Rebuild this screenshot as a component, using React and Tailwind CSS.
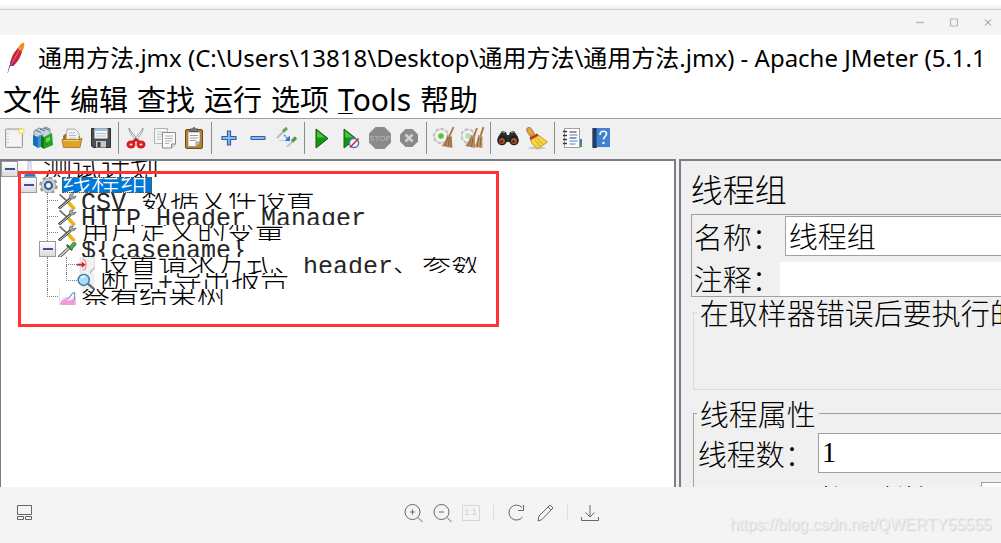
import React from "react";

const UI = "font-['Noto_Sans','Noto_Sans_CJK_SC',sans-serif]";
const TREE_FONT = "font-['Liberation_Mono','Noto_Sans_CJK_SC',monospace] font-light";
const FORM_FONT = "font-['Noto_Sans_CJK_SC',sans-serif] font-light";
const MONO = "font-['Liberation_Mono',monospace] text-[25px] font-normal text-neutral-800";
const DIGITS = "font-['Liberation_Serif',serif] text-[29px] font-normal";

function Svg({ children, className = "size-6", box = "0 0 24 24" }) {
  return (
    <svg viewBox={box} className={className} fill="none" aria-hidden="true">
      {children}
    </svg>
  );
}

const NewFile = () => (
  <Svg>
    <rect x="3.500" y="3" width="17" height="18.500" rx="1" fill="#e4e4e4" stroke="#9b9b9b" />
    <rect x="5" y="4.500" width="14" height="15.500" fill="#f4f4f4" />
    <path d="M6 7v11" stroke="#aaa" strokeDasharray="1 2" />
    <circle cx="19.500" cy="5" r="3.600" fill="#f4e04d" opacity=".65" />
    <circle cx="19.500" cy="5" r="1.800" fill="#fffbd0" />
  </Svg>
);
const Templates = () => (
  <Svg>
    <path d="M3 5l5-3 3 1 4-2 4 2v7L8 14 3 12z" fill="#c9d3d8" stroke="#6b8190" strokeWidth=".8" />
    <path d="M5 4.500l5 2M9 3l5 2M13 2l5 2" stroke="#4c6c80" />
    <path d="M2 9l5 2v11l-5-3z" fill="#1b6fb4" />
    <path d="M7 10l5-2 1 12-6 2z" fill="#3795d8" />
    <path d="M10 10l3 1v12l-3-2z" fill="#107a10" />
    <path d="M13 11l8-4 1 12-9 4z" fill="#27a51d" />
    <path d="M15 12.500l4-2v4l-4 2z" fill="#72d35f" />
    <path d="M15 18.500l1.500-.7" stroke="#083" strokeWidth="2" />
  </Svg>
);
const Open = () => (
  <Svg>
    <path d="M3 20V10l2-2h5l1 2h9v10z" fill="#a87412" />
    <path d="M6 15l1-12h8l4 4v9z" fill="#f4f4f4" stroke="#999" strokeWidth=".8" />
    <path d="M9 7h6M9 9.500h7M9 12h7" stroke="#b9b9b9" />
    <path d="M2 13.500h17l3-1.500-2 9.500H3.500z" fill="#dfa32b" stroke="#a16d10" strokeWidth=".8" />
    <path d="M3 14.500h16" stroke="#f6cf70" />
  </Svg>
);
const Save = () => (
  <Svg>
    <path d="M2.500 2.500h19v19H4l-1.500-1.500z" fill="#4c4f52" stroke="#2d2f31" />
    <rect x="5.500" y="2.500" width="13" height="10" fill="#f3f6f8" />
    <rect x="5.500" y="2.500" width="13" height="2.500" fill="#9cc3e4" />
    <path d="M7 7.500h10M7 10h10" stroke="#b9c0c5" />
    <rect x="7" y="15" width="10" height="6.500" fill="#c6c9cc" />
    <rect x="8.500" y="16" width="3" height="5" fill="#383a3c" />
  </Svg>
);
const Cut = () => (
  <Svg>
    <path d="M5 2c0 4 3 8 8 13l1.500-1.500C10 9 7 6 5 2z" fill="#e8e8e8" stroke="#8a8a8a" strokeWidth=".8" />
    <path d="M19 2c0 4-3 8-8 13l-1.500-1.500C14 9 17 6 19 2z" fill="#f4f4f4" stroke="#8a8a8a" strokeWidth=".8" />
    <ellipse cx="7" cy="18.500" rx="3" ry="2.600" stroke="#d81e1e" strokeWidth="3" />
    <ellipse cx="17" cy="18.500" rx="3" ry="2.600" stroke="#d81e1e" strokeWidth="3" />
    <path d="M9 16l3-2.500 3 2.500" stroke="#d81e1e" strokeWidth="2.600" />
  </Svg>
);
const Copy = () => (
  <Svg>
    <path d="M1.500 2.500h13v15h-13z" fill="#f5f5f5" stroke="#b3b3b3" />
    <path d="M4 6h8M4 8.500h5M4 11h4M4 13.500h4" stroke="#c5c5c5" />
    <path d="M9.500 6.500h13V18l-4 4h-9z" fill="#fafafa" stroke="#8c8c8c" />
    <path d="M12 10h8M12 12.500h8M12 15h7M12 17.500h4" stroke="#b0b0b0" />
    <path d="M18.500 22v-4h4" fill="#ddd" stroke="#8c8c8c" />
  </Svg>
);
const Paste = () => (
  <Svg>
    <rect x="3.500" y="3.500" width="17" height="19" rx="1.500" fill="#b7812e" stroke="#6f4a10" />
    <path d="M6 6h12v10l-4 4.500H6z" fill="#fafafa" stroke="#888" strokeWidth=".7" />
    <path d="M8 9.500h8M8 12h8M8 14.500h6" stroke="#9a9a9a" />
    <path d="M14 20.500V16h4" fill="#ccc" stroke="#777" strokeWidth=".7" />
    <path d="M8 5.500V3h2.500l1-1.500h1l1 1.500H16v2.500z" fill="#777b7d" stroke="#454545" strokeWidth=".8" />
  </Svg>
);
const Plus = () => (
  <Svg>
    <path d="M10.500 5h3v5.500H19v3h-5.500V19h-3v-5.500H5v-3h5.500z" fill="#8cb8e8" stroke="#2c62a8" strokeWidth="1.200" />
  </Svg>
);
const Minus = () => (
  <Svg>
    <rect x="5" y="10.500" width="14" height="3" rx=".5" fill="#8cb8e8" stroke="#2c62a8" strokeWidth="1.200" />
  </Svg>
);
const Toggle = () => (
  <Svg>
    <path d="M2 12l7-7" stroke="#b9b9b9" strokeWidth="2" />
    <path d="M8 5.500L12 2" stroke="#6ba367" strokeWidth="3.200" />
    <path d="M12 21l6-6" stroke="#c5c5c5" strokeWidth="2" />
    <path d="M17 15.500l4-4" stroke="#57964f" strokeWidth="3.200" />
    <path d="M9 9l4 4" stroke="#3b7de0" strokeWidth="1.500" strokeDasharray="2 1" />
    <path d="M15 9.500V15H9.500z" fill="#2f76df" />
    <path d="M4 14.500h5" stroke="#ccc" />
  </Svg>
);
const Run = () => (
  <Svg>
    <path d="M6 3l12 9.500L6 22z" fill="#149414" stroke="#0a5c0a" />
    <path d="M7 5l8 6.500H7z" fill="#54bd42" />
  </Svg>
);
const RunNoPause = () => (
  <Svg>
    <path d="M5 3l12 9.500L5 22z" fill="#149414" stroke="#0a6c0a" />
    <path d="M6 5l8 6.500H6z" fill="#54bd42" />
    <circle cx="15" cy="17" r="4.600" fill="#f3f6fc" stroke="#4e7bc4" strokeWidth="1.500" />
    <path d="M11 21.500l8.500-9" stroke="#d22" strokeWidth="1.400" />
  </Svg>
);
const Stop = () => (
  <Svg>
    <path d="M7.500 1h9L23 7.500v9L16.500 23h-9L1 16.500v-9z" fill="#8a8a8a" />
    <text x="12" y="15" textAnchor="middle" fontSize="8" fill="#b8b8b8" fontFamily="Liberation Sans, sans-serif">
      STOP
    </text>
  </Svg>
);
const Shutdown = () => (
  <Svg>
    <path d="M8.500 3h7L21 8.500v7L15.500 21h-7L3 15.500v-7z" fill="#8a8a8a" />
    <path d="M8.500 8.500l7 7M15.500 8.500l-7 7" stroke="#d0d0d0" strokeWidth="2.600" />
  </Svg>
);
function Gear({ cx, cy, r, dot }) {
  return (
    <g>
      <circle cx={cx} cy={cy} r={r} stroke="#bcc0bc" strokeWidth="3.400" strokeDasharray="3.200 1.700" />
      <circle cx={cx} cy={cy} r={r} fill="#f0f2f0" stroke="#c2c6c2" strokeWidth=".8" />
      <circle cx={cx} cy={cy} r="2.800" fill={dot} />
    </g>
  );
}
const Clear = () => (
  <Svg>
    <Gear cx={9} cy={10} r={6.5} dot="#5fbf3c" />
    <path d="M21.500 1l-4 9" stroke="#a8703a" strokeWidth="1.800" />
    <path d="M15 9l4.500 1 1 12-11-2c3-3 5-7 5.500-11z" fill="#b98e5e" />
    <path d="M16 11l-3 9M17.500 11l-1.500 10M19 11v10" stroke="#7c5630" strokeWidth=".8" />
  </Svg>
);
const ClearAll = () => (
  <Svg>
    <Gear cx={7} cy={10} r={6} dot="#b9dcae" />
    <path d="M16 2l-3 8M22.500 1l-3 9" stroke="#a8703a" strokeWidth="1.800" />
    <path d="M10 9l4 1v12l-10-2c3-3 5-7 6-11z" fill="#b98e5e" />
    <path d="M17 9l4.500 1v12l-9-1c3-3 4-8 4.500-12z" fill="#c09a6e" />
    <path d="M10 12l-3 8M12 12l-1.500 9M18 11l-2 10M20 11l-1 10" stroke="#7c5630" strokeWidth=".8" />
  </Svg>
);
const Search = () => (
  <Svg>
    <path d="M2 11l4-6 4 1 1 3h2l1-3 4-1 4 6v5H2z" fill="#2e2e2e" />
    <path d="M6 6l3 .5M15 6.500l3-.5" stroke="#999" strokeWidth="1.200" />
    <circle cx="6" cy="14.500" r="4.800" fill="#202020" />
    <circle cx="18" cy="14.500" r="4.800" fill="#202020" />
    <circle cx="6" cy="15" r="3" fill="#a4542f" />
    <circle cx="18" cy="15" r="3" fill="#a4542f" />
    <circle cx="5.500" cy="15.500" r="1.300" fill="#4a2415" />
    <circle cx="17.500" cy="15.500" r="1.300" fill="#4a2415" />
  </Svg>
);
const Broom = () => (
  <Svg>
    <ellipse cx="12" cy="22" rx="9" ry="1.500" fill="#ccc" />
    <path d="M1.500 3c1-2 4-2 5 0l3 5-4 2.500-3-4z" fill="#dfa544" stroke="#9a6213" strokeWidth=".8" />
    <path d="M4.500 11.500L12 7.500l2 2-8.500 5z" fill="#d2232a" />
    <path d="M5.500 14L14 9.500c3 3 6 4 8.500 6.500L13 22.500c-3-1-6-4-7.500-8.500z" fill="#f5d640" stroke="#b28a12" strokeWidth=".8" />
    <path d="M10 14l5 6M12.500 12.500l5.500 6" stroke="#c59b1b" strokeWidth=".8" />
  </Svg>
);
const FunctionHelper = () => (
  <Svg>
    <rect x="4.500" y="2.500" width="15" height="19" fill="#fff" stroke="#a0a0a0" />
    <path d="M3 5.500h4M3 9.500h4M3 13.500h4M3 17.500h4" stroke="#333" strokeWidth="1.500" />
    <path d="M9.500 6h7M9.500 12h7" stroke="#333" strokeWidth="1.200" />
    <path d="M9.500 9h8M9.500 15h8M9.500 18h6" stroke="#4285d6" strokeWidth="1.200" />
    <path d="M20 13h2v4h-2z" fill="#3a76cc" />
    <path d="M20 17h2v4h-2z" fill="#36a336" />
  </Svg>
);
const Help = () => (
  <Svg>
    <rect x="3.500" y="2" width="17.500" height="20" rx="1" fill="#3f82cf" />
    <rect x="3.500" y="2" width="4" height="20" fill="#253d5c" />
    <path d="M8 21.500h13" stroke="#dfe8f2" />
    <path d="M11 9c0-5 7-4.500 6.500-1 0 2.500-3 2.500-3 5.500" stroke="#fff" strokeWidth="1.600" />
    <circle cx="14.500" cy="17" r="1.200" fill="#fff" />
  </Svg>
);

const TOOL_GROUPS = [
  [["New", NewFile], ["Templates", Templates], ["Open", Open], ["Save", Save]],
  [["Cut", Cut], ["Copy", Copy], ["Paste", Paste]],
  [["Expand all", Plus], ["Collapse all", Minus], ["Toggle", Toggle]],
  [["Start", Run], ["Start no pauses", RunNoPause], ["Stop", Stop], ["Shutdown", Shutdown]],
  [["Clear", Clear], ["Clear all", ClearAll]],
  [["Search", Search], ["Reset search", Broom]],
  [["Function helper", FunctionHelper], ["Help", Help]],
];

const Flask = () => (
  <Svg className="size-[19px]">
    <path d="M10 2v9l-5 9h15l-6-9V2z" fill="#e3ebf3" stroke="#b3bcc6" />
    <path d="M8 15l-3 6h15l-3-6z" fill="#2f7ccc" />
  </Svg>
);
const Cog = () => (
  <Svg className="size-[19px]">
    <circle cx="12" cy="12" r="10" stroke="#9a9a9a" strokeWidth="3.500" strokeDasharray="4.400 3.450" />
    <circle cx="12" cy="12" r="9" fill="#d4d4d4" stroke="#a0a0a0" />
    <circle cx="12" cy="12" r="4.500" fill="#f4f8fc" stroke="#38629c" strokeWidth="2.800" />
  </Svg>
);
const Tools = () => (
  <Svg className="size-[19px]">
    <path d="M2 3l11 10" stroke="#6a6a6a" strokeWidth="2" />
    <path d="M13 13l8 9" stroke="#e9b414" strokeWidth="4.500" />
    <path d="M1 21L16 8" stroke="#4e5050" strokeWidth="3.600" />
    <path d="M2 20.500L16 8.500" stroke="#d5d7d7" strokeWidth="1.200" />
    <path d="M15 3c-2 4 1 7 6 5l2-3-4 1-1-2 2-2z" fill="#a5a8a8" stroke="#555" strokeWidth=".8" />
  </Svg>
);
const Dropper = () => (
  <Svg className="size-[19px]">
    <path d="M1 22L15 9" stroke="#555" strokeWidth="4" />
    <path d="M2 21L15 9" stroke="#d9d9d9" strokeWidth="1.800" />
    <path d="M11 6l7 7" stroke="#306b2e" strokeWidth="2.500" />
    <path d="M14 9l5-6c3-1 5 2 3 4l-5 5z" fill="#53a64b" stroke="#2e7730" />
  </Svg>
);
const Page = () => (
  <Svg className="size-[19px]">
    <path d="M4 1h18v15l-5 7H4z" fill="#f1f1f1" stroke="#d3d3d3" />
    <path d="M17 23c0-4 1-6 5-7" stroke="#888" />
    <path d="M0 11h7" stroke="#d22531" strokeWidth="2.500" />
    <path d="M6 7l5 4-5 4" fill="#d22531" />
    <path d="M7 4c6 1 6 13 0 14" stroke="#e58a92" strokeWidth="1.500" />
  </Svg>
);
const Lens = () => (
  <Svg className="size-[19px]">
    <path d="M4 1h18v21H4z" fill="#eeeeee" />
    <path d="M14 15l8 7" stroke="#6a6a6a" strokeWidth="3" />
    <circle cx="8.500" cy="10" r="7" fill="#a9dcf7" stroke="#3d78a3" strokeWidth="1.800" />
    <path d="M5 8c1-2 3-2.500 5-2" stroke="#fff" strokeWidth="1.500" />
  </Svg>
);
const Chart = () => (
  <Svg className="size-[19px]">
    <path d="M2 1v22" stroke="#aaa" strokeDasharray="1 1.500" />
    <path d="M3 15l6-5 5 6 8-9v15H3z" fill="#fbe3f5" />
    <path d="M3 18l6-5 5 3 8-3v9H3z" fill="#f29bd6" />
    <path d="M11 12c3 6 5-7 10-6v9" stroke="#7b96dd" strokeWidth="1.500" />
  </Svg>
);

const TREE = [
  { cells: ["box"], Icon: Flask, text: "测试计划" },
  { cells: ["blank", "box"], Icon: Cog, text: "线程组", selected: true },
  { cells: ["blank", "blank", "tee"], Icon: Tools, text: "CSV 数据文件设置" },
  { cells: ["blank", "blank", "tee"], Icon: Tools, text: "HTTP Header Manager" },
  { cells: ["blank", "blank", "tee"], Icon: Tools, text: "用户定义的变量" },
  { cells: ["blank", "blank", "box"], Icon: Dropper, text: "${casename}" },
  { cells: ["blank", "blank", "line", "tee"], Icon: Page, text: "设置请求方式、header、参数" },
  { cells: ["blank", "blank", "line", "end"], Icon: Lens, text: "断言+导出报告" },
  { cells: ["blank", "blank", "end"], Icon: Chart, text: "察看结果树" },
];

function Cell({ kind }) {
  if (kind === "box") {
    return (
      <span className="flex h-4 w-[19px] shrink-0">
        <button
          aria-label="Collapse"
          className="flex h-4 w-[17px] items-center justify-center border border-[#9a9a9a] bg-linear-to-b from-white to-[#dcdcdc]"
        >
          <span className="h-0.5 w-2.5 bg-[#3c4f9c]" />
        </button>
      </span>
    );
  }
  if (kind === "blank") return <span className="h-4 w-[19px] shrink-0" />;
  return (
    <span className="flex h-4 w-[19px] shrink-0 flex-col pl-2">
      <span
        className={
          kind === "line"
            ? "h-2 border-l border-dotted border-[#808080]"
            : "h-2 border-b border-l border-dotted border-[#808080]"
        }
      />
      <span className={kind === "end" ? "h-2" : "h-2 border-l border-dotted border-[#808080]"} />
    </span>
  );
}

/* Sets runs of ASCII in the monospaced face, half the width of a full-width character. */
function Mixed({ text }) {
  return text.split(/([\x20-\x7e]+)/).map((part, i) =>
    i % 2 ? (
      <span key={i} className={MONO}>
        {part}
      </span>
    ) : (
      part
    )
  );
}

function TreeRow({ cells, Icon, text, selected }) {
  return (
    <li className="flex h-4 overflow-hidden">
      {cells.map((kind, i) => (
        <Cell key={i} kind={kind} />
      ))}
      <span className="flex w-[19px] shrink-0 items-center justify-center">
        <Icon />
      </span>
      <span
        className={
          selected
            ? "ml-1 h-4 overflow-hidden bg-[#0078d7] pr-[3px] leading-5 whitespace-pre text-white outline-1 -outline-offset-1 outline-dotted outline-[#7a4a10]"
            : "ml-1 h-4 overflow-hidden leading-5 whitespace-pre"
        }
      >
        <Mixed text={text} />
      </span>
    </li>
  );
}

function ViewerFooter() {
  const icon = "size-6 stroke-[#666]";
  return (
    <footer className="relative flex h-14 shrink-0 items-center justify-center bg-[#f4f4f4]">
      <button aria-label="Thumbnails" className="absolute top-4 left-3">
        <Svg className={icon}>
          <path d="M5.500 2.500h14v9h-14zM5.500 13.500h6v3h-6zM13.500 13.500h6v3h-6z" />
        </Svg>
      </button>
      <div className="flex items-center gap-[5px] pb-1 pl-px">
        <button aria-label="Zoom in">
          <Svg className={icon}>
            <circle cx="11.500" cy="11" r="7.500" />
            <path d="M17 16.500l4.500 4.500M9 11h5M11.500 8.500v5" />
          </Svg>
        </button>
        <button aria-label="Zoom out">
          <Svg className={icon}>
            <circle cx="11.500" cy="11" r="7.500" />
            <path d="M17 16.500l4.500 4.500M9 11h5" />
          </Svg>
        </button>
        <button
          aria-label="Actual size"
          className="mx-[3px] flex h-4 w-[18px] items-center justify-center border border-[#d8d8d8] font-['Liberation_Sans',sans-serif] text-[9px] text-[#cfcfcf]"
        >
          1:1
        </button>
        <span className="mx-[5px] h-4 w-px bg-[#dedede]" />
        <button aria-label="Rotate">
          <Svg className={icon}>
            <path d="M18 6.500A7.500 7.500 0 1 0 18.500 16M19.500 4v5.500H14" />
          </Svg>
        </button>
        <button aria-label="Edit">
          <Svg className={icon}>
            <path d="M5 20l1-5L17 4l3 3L9 18.500zM15 6l3 3" />
          </Svg>
        </button>
        <span className="mx-[5px] h-4 w-px bg-[#dedede]" />
        <button aria-label="Download">
          <Svg className={icon}>
            <path d="M12 4v12M7.500 11.500L12 16l4.500-4.500M3.500 16v3.500h17V16" />
          </Svg>
        </button>
      </div>
      <a
        href="https://blog.csdn.net/QWERTY55555"
        className="absolute right-[9px] bottom-1.5 font-['Liberation_Sans',sans-serif] text-[16px] leading-6 text-[#ededed] [text-shadow:1px_1px_1px_#d0d0d0]"
      >
        https://blog.csdn.net/QWERTY55555
      </a>
    </footer>
  );
}

export default function App() {
  return (
    <div className="flex h-screen flex-col overflow-hidden bg-white text-black">
      <div className="h-2.5 shrink-0 border-b border-[#cccccc] bg-linear-to-b from-white from-40% to-[#ededed]" />
      <div className="flex h-[25px] shrink-0 items-center justify-end gap-6 bg-[#f4f4f4] pr-2">
        <button aria-label="Minimize">
          <Svg box="0 0 10 10" className="size-2.5"><path d="M1 4.500h8" stroke="#bdbdbd" strokeWidth="1.500" /></Svg>
        </button>
        <button aria-label="Maximize">
          <Svg box="0 0 10 10" className="size-2.5"><rect x="1.500" y="1" width="7" height="7" rx=".5" stroke="#b5b5b5" strokeWidth="1.200" /></Svg>
        </button>
        <button aria-label="Close">
          <Svg box="0 0 10 10" className="size-2.5"><path d="M2 1.500l6 6M8 1.500l-6 6" stroke="#8c8c8c" /></Svg>
        </button>
      </div>

      <header className={`flex h-[46px] shrink-0 items-center overflow-hidden ${UI}`}>
        <Svg box="0 0 20 34" className="mr-3 ml-1.5 h-[34px] w-5 shrink-0">
          <path d="M1.500 32c1-4 1.500-7 3-10l1 .500c-1.500 3-2.500 5-3.500 9.500z" fill="#6d2a7b" />
          <path d="M4 25c0-6 3-13 8-18l4 3c-1 6-5 12-9 15z" fill="#c8203f" />
          <path d="M4 25c0-2 .5-4 1-5.500l4 3-2 2.500z" fill="#8b2a78" />
          <path d="M11.500 7.500C14 3.500 16.500 1 18 2c1 2-.5 6-2 8.500z" fill="#f28b1e" />
          <path d="M5 24L15 6" stroke="#f4b7a5" strokeWidth=".6" />
        </Svg>
        <h1 className="text-[24px] leading-[34px] whitespace-pre">
          通用方法.jmx (C:\Users\13818\Desktop\通用方法\通用方法.jmx) - Apache JMeter (5.1.1
        </h1>
      </header>

      <nav className={`flex h-[38px] shrink-0 items-center gap-[9px] border-b border-[#a0a0a0] pl-[3px] text-[29px] leading-[34px] whitespace-nowrap ${UI}`}>
        <button>文件</button>
        <button>编辑</button>
        <button>查找</button>
        <button>运行</button>
        <button>选项</button>
        <button className="text-[30px]"><span className="underline decoration-1 underline-offset-2">T</span>ools</button>
        <button>帮助</button>
      </nav>

      <div role="toolbar" className="flex h-10 shrink-0 items-center bg-[#f0f0f0] pb-0.5">
        {TOOL_GROUPS.map((group, g) => (
          <React.Fragment key={g}>
            {g > 0 && <span className="mr-[3px] ml-0.5 h-8 w-px bg-[#8c8c8c]" />}
            {group.map(([name, Icon]) => (
              <button key={name} aria-label={name} className="flex w-[29px] justify-start pl-0.5">
                <Icon />
              </button>
            ))}
          </React.Fragment>
        ))}
      </div>

      <main className="flex min-h-0 flex-1 gap-[3px] overflow-hidden bg-[#f0f0f0] text-[29px]">
        <section className={`relative w-[67.5%] shrink-0 border-t-2 border-r-2 border-l border-[#7c7c84] bg-white ${TREE_FONT}`}>
          <ul>
            {TREE.map((row) => (
              <TreeRow key={row.text} {...row} />
            ))}
          </ul>
          <div className="pointer-events-none absolute top-2.5 left-[17px] h-[156px] w-[481px] border-3 border-[#ff3333]" />
        </section>

        <section className={`min-w-0 flex-1 overflow-hidden border-t-2 border-l-2 border-[#7c7c84] pl-2.5 whitespace-nowrap ${FORM_FONT}`}>
          <h2 className="pt-[7px] pb-px text-[32px] leading-10">线程组</h2>
          <div className="mt-[5px] border border-r-0 border-[#a0a0a0] pt-px pl-0.5">
            <div className="flex items-center">
              <label htmlFor="name" className="w-[91px] leading-9">名称：</label>
              <input id="name" defaultValue="线程组" className="h-10 min-w-0 flex-1 border border-r-0 border-[#a0a0a0] bg-white pl-[3px]" />
            </div>
            <div className="flex items-end pt-1">
              <label htmlFor="comment" className="w-[86px] leading-9">注释：</label>
              <input id="comment" className="h-[34px] min-w-0 flex-1 bg-white pl-[3px]" />
            </div>
          </div>
          <fieldset className="ml-0.5 h-[93px] border border-r-0 border-[#dcdcdc]">
            <legend className="ml-[3px] px-[3px] leading-[30px]">在取样器错误后要执行的动作</legend>
          </fieldset>
          <fieldset className="mt-2 ml-0.5 border border-r-0 border-[#a0a0a0] pl-1">
            <legend className="-ml-px px-[3px] leading-[30px]">线程属性</legend>
            <div className="mt-[5px] flex items-center">
              <label htmlFor="threads" className="w-[120px] leading-10">线程数：</label>
              <input id="threads" defaultValue="1" className={`h-10 min-w-0 flex-1 border border-r-0 border-[#a0a0a0] bg-white pl-[3px] ${DIGITS}`} />
            </div>
            <div className="mt-[5px] flex items-center">
              <label htmlFor="ramp" className="w-[283px] shrink-0 leading-10">
                <Mixed text="Ramp-Up时间（秒）：" />
              </label>
              <input id="ramp" defaultValue="1" className={`h-10 min-w-0 flex-1 border border-r-0 border-[#a0a0a0] bg-white pl-[3px] ${DIGITS}`} />
            </div>
          </fieldset>
        </section>
      </main>

      <ViewerFooter />
    </div>
  );
}
